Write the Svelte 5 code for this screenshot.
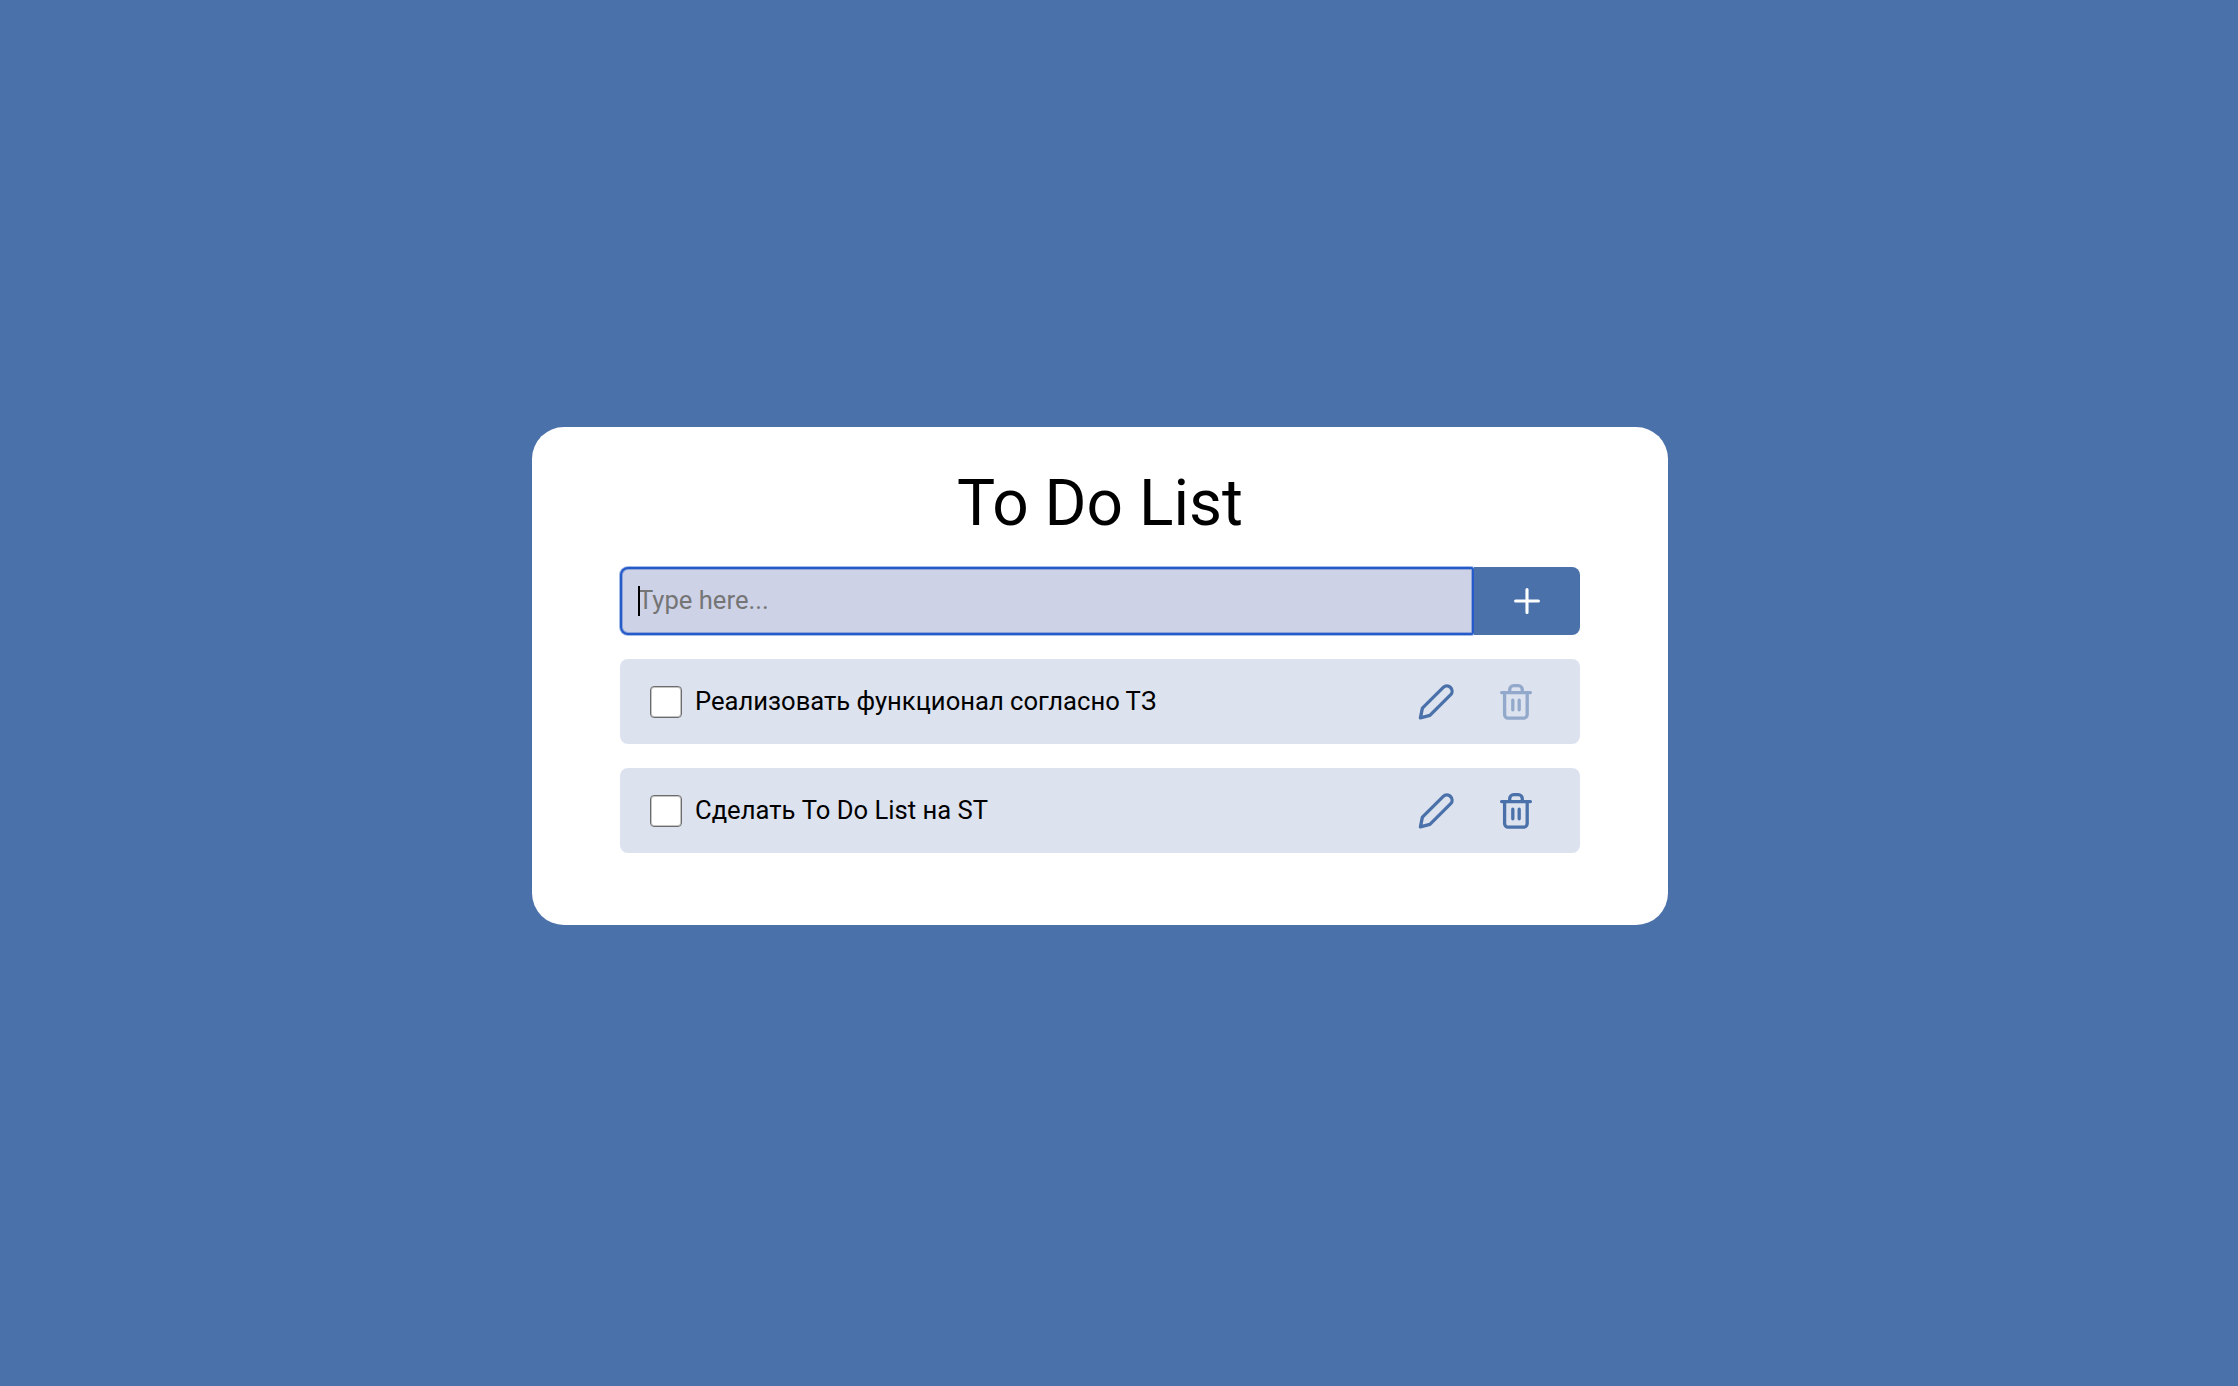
<script>
  import { onMount } from 'svelte';

  let tasks = $state([
    { id: 1, title: 'Реализовать функционал согласно ТЗ', done: false, faded: true },
    { id: 2, title: 'Сделать To Do List на ST', done: false, faded: false }
  ]);
  let draft = $state('');
  let field;

  onMount(() => field.focus());

  function add(event) {
    event.preventDefault();
    const title = draft.trim();
    if (!title) return;
    tasks.push({ id: Date.now(), title, done: false, faded: false });
    draft = '';
  }

  function remove(id) {
    tasks = tasks.filter((task) => task.id !== id);
  }
</script>

<main class="page">
  <section class="card">
    <h1>To Do List</h1>

    <form class="entry" onsubmit={add}>
      <div class="field">
        <span class="caret"></span>
        <input bind:this={field} bind:value={draft} placeholder="Type here..." />
      </div>
      <button class="add" aria-label="Add">
        <svg width="28" height="28" viewBox="0 0 28 28">
          <path d="M14 2.6v22.8M2.6 14h22.8" />
        </svg>
      </button>
    </form>

    <ul class="tasks">
      {#each tasks as task (task.id)}
        <li class="task">
          <label>
            <input type="checkbox" bind:checked={task.done} />
            <span>{task.title}</span>
          </label>
          <button class="icon" aria-label="Edit">
            <svg width="40" height="40" viewBox="0 0 40 40">
              <path d="M4.4 36.9 6.4 27.1 27.3 6.4a5.2 5.2 0 0 1 7.4 7.3L13.9 34.4Z" />
            </svg>
          </button>
          <button class="icon" class:faded={task.faded} aria-label="Delete" onclick={() => remove(task.id)}>
            <svg width="40" height="40" viewBox="0 0 40 40">
              <path d="M5.6 11.6h28.8M8.6 11.6v22a3.5 3.5 0 0 0 3.5 3.5h15.6a3.5 3.5 0 0 0 3.5-3.5v-22M13.7 11.6V8.7a4 4 0 0 1 4-4h4.6a4 4 0 0 1 4 4V11.6M16.8 19.2v9.6M23.2 19.2v9.6" />
            </svg>
          </button>
        </li>
      {/each}
    </ul>
  </section>
</main>

<style>
  :global(body) {
    background: #4a71aa;
  }

  .page {
    box-sizing: border-box;
    min-height: 100vh;
    padding: 427px 0 0 532px;
    font-family: Roboto, 'Liberation Sans', sans-serif;
    color: #000;
  }

  .card {
    box-sizing: border-box;
    width: 1136px;
    height: 498px;
    padding: 39px 88px 0;
    border-radius: 32px;
    background: #fff;
  }

  h1 {
    margin: 0 0 25px;
    font-size: 64px;
    font-weight: 400;
    line-height: 76px;
    text-align: center;
  }

  .entry {
    display: flex;
    height: 68px;
  }

  .field {
    box-sizing: border-box;
    display: flex;
    align-items: center;
    width: 854px;
    padding: 0 16px 2px 18px;
    border-radius: 8px 3px 3px 8px;
    background: #ced2e7;
    box-shadow: inset 0 0 0 2px #245bc8, inset 0 0 0 3px #8fa5dc, 0 0 0 1px #a3bbe8;
  }

  .caret {
    width: 2px;
    height: 30px;
    margin: 2px -2px 0 0;
    background: #000;
    z-index: 1;
  }

  .field input {
    flex: 1;
    min-width: 0;
    padding: 0;
    border: 0;
    outline: 0;
    background: none;
    caret-color: transparent;
    font: 25.6px Roboto, 'Liberation Sans', sans-serif;
  }

  .field input::placeholder {
    color: #757575;
  }

  .add {
    display: grid;
    place-items: center;
    width: 106px;
    padding: 0;
    border: 0;
    border-radius: 0 8px 8px 0;
    background: #4a71aa;
    color: #fff;
    z-index: 1;
  }

  svg {
    display: block;
    fill: none;
    stroke: currentColor;
    stroke-width: 3.3;
    stroke-linecap: round;
    stroke-linejoin: round;
  }

  .add svg {
    stroke-width: 3.1;
  }

  .tasks {
    display: grid;
    gap: 24px;
    margin: 24px 0 0;
    padding: 0;
    list-style: none;
  }

  .task {
    box-sizing: border-box;
    display: flex;
    align-items: flex-start;
    height: 85px;
    padding: 22px 44px 0 30px;
    border-radius: 8px;
    background: #dce2ee;
  }

  label {
    flex: 1;
    display: flex;
    align-items: flex-start;
    gap: 13px;
    padding-top: 5px;
    font-size: 25.6px;
    line-height: 30px;
  }

  label input {
    appearance: none;
    box-sizing: border-box;
    width: 32px;
    height: 32px;
    margin: 0;
    border: 1px solid #6c6c6c;
    border-radius: 4px;
    background: #fff;
    box-shadow: inset 0 0 0 1px #c4c4c4;
  }

  label input:checked {
    background: #4a71aa;
  }

  .icon {
    padding: 0;
    border: 0;
    background: none;
    color: #4a71aa;
  }

  .icon + .icon {
    margin-left: 40px;
  }

  .faded {
    opacity: 0.5;
  }
</style>
